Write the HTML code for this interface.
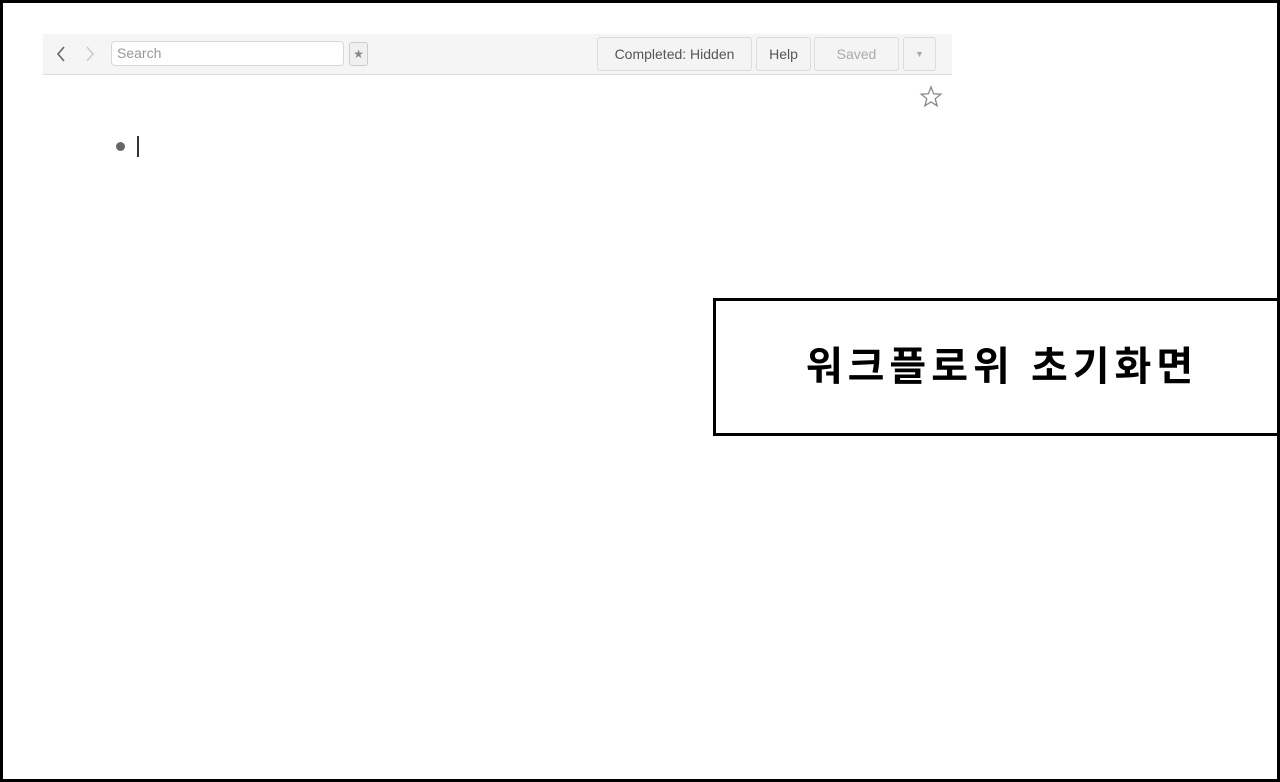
<!DOCTYPE html>
<html><head><meta charset="utf-8"><style>
*{margin:0;padding:0;box-sizing:border-box}
body{width:1280px;height:782px;background:#fff;position:relative;overflow:hidden;font-family:"Liberation Sans",Arial,sans-serif}
.frame{position:absolute;left:0;top:0;width:1280px;height:782px;border:3px solid #000}
.bar{position:absolute;left:43px;top:34px;width:909px;height:41px;background:#f5f5f5;border-bottom:1px solid #dcdcdc}
.search{position:absolute;left:111px;top:41px;width:233px;height:25px;background:#fff;border:1px solid #d8d8d8;border-radius:4px;font-size:14px;color:#999;padding:3px 5px}
.sbtn{position:absolute;left:349px;top:42px;width:19px;height:24px;border:1px solid #ccc;border-radius:3px;background:#f0f0f0;color:#888;font-size:12px;text-align:center;line-height:22px}
.btn{position:absolute;top:37px;height:34px;border:1px solid #dcdcdc;border-radius:3px;background:#f4f4f4;font-size:14px;color:#555;text-align:center;line-height:32px}
.box{position:absolute;left:713px;top:298px;width:570px;height:138px;border:3px solid #000;font-family:"Liberation Sans","Noto Sans CJK KR",sans-serif;font-weight:bold;font-size:40px;letter-spacing:5px;text-align:center;line-height:132px;padding-left:8px}
</style></head><body>
<div class="bar"></div>
<svg style="position:absolute;left:54px;top:45px" width="14" height="18"><path d="M10 2 L4 9 L10 16" stroke="#666" stroke-width="1.6" fill="none"/></svg>
<svg style="position:absolute;left:83px;top:45px" width="14" height="18"><path d="M4 2 L10 9 L4 16" stroke="#ccc" stroke-width="1.6" fill="none"/></svg>
<div class="search">Search</div>
<div class="sbtn">★</div>
<div class="btn" style="left:597px;width:155px">Completed: Hidden</div>
<div class="btn" style="left:756px;width:55px">Help</div>
<div class="btn" style="left:814px;width:85px;color:#aaa">Saved</div>
<div class="btn" style="left:903px;width:33px;color:#aaa;font-size:9px">▼</div>
<svg style="position:absolute;left:919px;top:85px" width="24" height="24" viewBox="0 0 24 24"><path d="M12 2 L14.6 8.8 L21.8 9.2 L16.2 13.8 L18.1 20.8 L12 16.9 L5.9 20.8 L7.8 13.8 L2.2 9.2 L9.4 8.8 Z" fill="none" stroke="#888" stroke-width="1.3"/></svg>
<div style="position:absolute;left:116px;top:142px;width:9px;height:9px;border-radius:50%;background:#666"></div>
<div style="position:absolute;left:137px;top:136px;width:2px;height:21px;background:#333"></div>
<div class="box">워크플로위 초기화면</div>
<div class="frame"></div>
</body></html>
